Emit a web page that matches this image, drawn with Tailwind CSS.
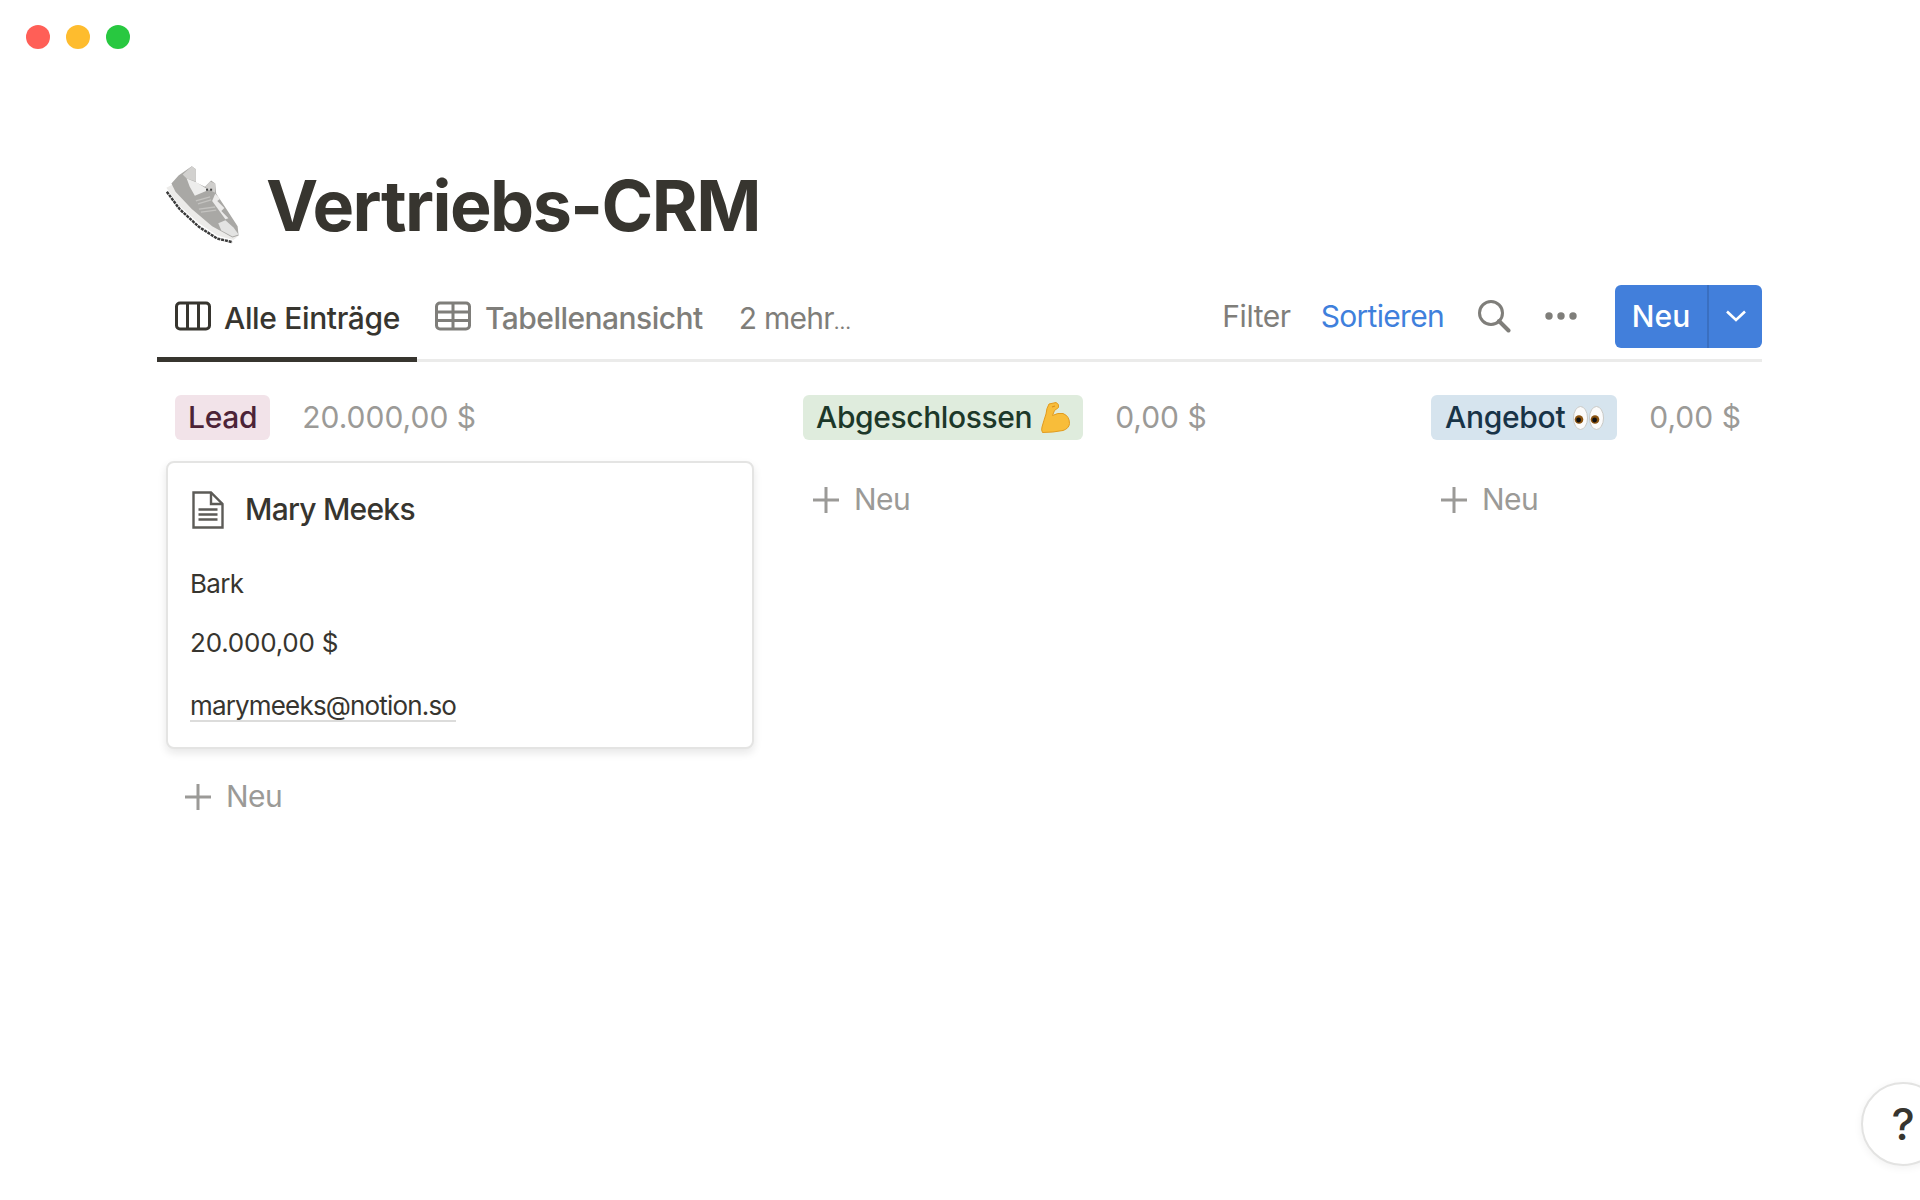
<!DOCTYPE html>
<html lang="de">
<head>
  <meta charset="UTF-8">
  <title>Vertriebs-CRM</title>
  <script src="https://cdn.jsdelivr.net/npm/@tailwindcss/browser@4"></script>
</head>
<body class="relative h-[1200px] w-[1920px] overflow-hidden bg-white font-['Inter',sans-serif] text-[#37352f] antialiased">
  <!-- window buttons -->
  <div class="flex gap-4 pl-[26px] pt-[25px]">
    <span class="size-6 rounded-full bg-[#ff5f57]"></span>
    <span class="size-6 rounded-full bg-[#febc2e]"></span>
    <span class="size-6 rounded-full bg-[#28c840]"></span>
  </div>

  <div class="pl-[157px] pr-[158px]">
    <!-- title -->
    <div class="mt-[115px] flex h-[84px] items-center pl-2">
      <svg class="-ml-[17px] mr-[6px] size-[112px] shrink-0" viewBox="0 0 110 110">
        <path d="M18.5 41 L31 58 L50 75.5 L68 87 L83 90.5" fill="none" stroke="#3a3a3a" stroke-width="2.4" stroke-dasharray="3 0.8"/>
        <path d="M18 37 L31 55 L50 72 L68 84 L84 88.5 L89 84 L60 60 L28 32 Z" fill="#ecebe9"/>
        <path d="M43 16 L47 19 L47 32 L56 36 L62 30 L66 33 L67 43 L77 58 L88 75 L89 84 L83 86 L63 75 L43 58 L27 41 L23 33 L30 25 Z" fill="#a9a8a5"/>
        <path d="M43 16 L47 19 L47 31 L38 28 L34 24 Z" fill="#d2d1cf"/>
        <path d="M38 28 L48 32 L56 37 L60 39 L46 45 L41 36 Z" fill="#ededec"/>
        <path d="M61 31 L66 33 L66 42 L60 39 L56 36 Z" fill="#cfcecc"/>
        <path d="M66 43 L71 48 L68 50 L75 57 L72 60 L79 67 L76 68 L68 57 L63 50 Z" fill="#ecebea"/>
        <path d="M69 72 L76 69 L84 76 L89 83 L83 85 L72 79 Z" fill="#e3e3e2"/>
        <path d="M47 50 L61 46 M49 53 L62 49 M50 58 L66 56 M52 61 L67 59" stroke="#c4c3c0" stroke-width="1.3" fill="none"/>
        <rect x="57" y="38" width="2" height="2" fill="#444"/><rect x="61" y="38" width="2" height="2" fill="#444"/>
      </svg>
      <h1 class="text-[70px] leading-none font-bold tracking-[-0.022em]">Vertriebs-CRM</h1>
    </div>

    <!-- view tabs and actions -->
    <div class="mt-[29px] flex h-[85px] items-center border-b-[3px] border-[#ebebea] pb-1">
      <div class="relative flex h-[78px] w-[260px] items-center gap-[13px] pt-1 pl-[18px] font-medium">
        <svg class="-mt-1 shrink-0" width="36" height="30" viewBox="0 0 36 30" fill="none" stroke="currentColor" stroke-width="3"><rect x="1.5" y="2" width="33" height="26" rx="3.5"/><path d="M12.5 2v26M23.5 2v26"/></svg>
        <span class="text-[30px] tracking-[-0.012em]">Alle Einträge</span>
        <span class="absolute inset-x-0 -bottom-[6.5px] h-[5px] bg-[#37352f]"></span>
      </div>
      <div class="ml-[18px] flex items-center gap-[14px] pt-1 font-medium text-[#7f7e7a]">
        <svg class="-mt-1 shrink-0" width="36" height="30" viewBox="0 0 36 30" fill="none" stroke="currentColor" stroke-width="3"><rect x="1.5" y="2" width="33" height="26" rx="3.5"/><path d="M1.5 11h33M1.5 19.5h33M18 2v26"/></svg>
        <span class="text-[30px] tracking-[-0.018em]">Tabellenansicht</span>
      </div>
      <span class="ml-[36px] pt-1 text-[30px] tracking-[-0.025em] text-[#7f7e7a]">2 mehr<span class="text-[20px]">…</span></span>
      <div class="ml-auto flex items-center">
        <span class="text-[30px] tracking-[-0.015em] text-[#7f7e7a]">Filter</span>
        <span class="ml-[30px] text-[30px] tracking-[-0.023em] text-[#3f80dc]">Sortieren</span>
        <svg class="ml-[33px]" width="34" height="34" viewBox="0 0 34 34" fill="none" stroke="#7f7e7a"><circle cx="14" cy="14" r="11.5" stroke-width="3"/><path d="M22 22 L31.5 31.5" stroke-width="4" stroke-linecap="round"/></svg>
        <svg class="ml-[34px]" width="32" height="8" viewBox="0 0 32 8" fill="#7f7e7a"><circle cx="4" cy="4" r="3.7"/><circle cx="16" cy="4" r="3.7"/><circle cx="28" cy="4" r="3.7"/></svg>
        <div class="ml-[38px] flex h-[63px] w-[147px] rounded-md bg-[#427fdb] text-white">
          <span class="flex w-[94px] items-center justify-center border-r-2 border-[#3a6fc0] text-[30px] font-medium">Neu</span>
          <span class="flex flex-1 items-center justify-center">
            <svg width="22" height="12" viewBox="0 0 22 12" fill="none" stroke="currentColor" stroke-width="2.6"><path d="M2 1.5 L11 10 L20 1.5"/></svg>
          </span>
        </div>
      </div>
    </div>

    <!-- board -->
    <div class="mt-[33px] ml-[10px] flex w-[1800px] gap-[42px]">
      <!-- Lead -->
      <section class="w-[586px] shrink-0">
        <div class="flex items-center pl-2">
          <span class="flex h-[45px] items-center rounded-md bg-[#f2e3e9] px-[13px] text-[30px] font-medium tracking-[-0.01em] text-[#4c2337]">Lead</span>
          <span class="ml-[32px] text-[30px] text-[#9b9a97]">20.000,00 $</span>
        </div>
        <article class="-mx-px mt-[21px] h-[288px] rounded-lg border-2 border-[#e4e4e3] bg-white pt-[24px] pl-6 shadow-[0_4px_8px_rgba(15,15,15,0.10)]">
          <div class="flex items-center gap-[21px]">
            <svg class="shrink-0" width="32" height="38" viewBox="0 0 32 38" fill="none" stroke="#5c5b57" stroke-width="2.4"><path d="M1.5 1.5H19L30.5 13V36.5H1.5Z"/><path d="M19 1.5V13H30.5M6.5 18.5H25.5M6.5 23.5H25.5M6.5 28.5H25.5"/></svg>
            <span class="text-[30px] font-medium tracking-[-0.025em]">Mary Meeks</span>
          </div>
          <div class="-ml-[2px]">
            <p class="mt-[36px] text-[26px] leading-[32px] tracking-[-0.025em]">Bark</p>
            <p class="mt-[27px] text-[26px] leading-[32px] tracking-[-0.008em]">20.000,00 $</p>
            <p class="mt-[33px] inline-block border-b-2 border-[#dcdcdb] text-[26px] leading-[28px] tracking-[-0.032em]">marymeeks@notion.so</p>
          </div>
        </article>
        <div class="mt-[25px] flex items-center gap-[14px] pl-[17px] text-[#9b9a97]">
          <svg width="28" height="28" viewBox="0 0 28 28" stroke="currentColor" stroke-width="3"><path d="M14 1V27M1 14H27"/></svg>
          <span class="text-[30px] tracking-[-0.02em]">Neu</span>
        </div>
      </section>

      <!-- Abgeschlossen -->
      <section class="w-[586px] shrink-0">
        <div class="flex items-center pl-2">
          <span class="flex h-[45px] items-center gap-[9px] rounded-md bg-[#dfecdd] px-[13px] text-[30px] font-medium tracking-[-0.013em] text-[#1c3829]">Abgeschlossen
            <svg width="29" height="31" viewBox="0 0 29 31"><path d="M8 2 L15 0.5 Q18.5 2 17.5 5.5 L13.5 8.5 L11.5 13.5 Q17 10.5 22 11.5 Q28.5 14 28.5 21.5 Q28 26.5 22 28.5 Q12 30.5 1.5 30.5 Q0 28 1 25 Q3 18 5 12 Q5.5 6 8 2Z" fill="#f8bd3a" stroke="#e29b1e" stroke-width="1"/><path d="M11 5 L14 4" stroke="#d98f1c" stroke-width="1.2"/></svg>
          </span>
          <span class="ml-[32px] text-[30px] text-[#9b9a97]">0,00 $</span>
        </div>
        <div class="mt-[37px] flex items-center gap-[14px] pl-[17px] text-[#9b9a97]">
          <svg width="28" height="28" viewBox="0 0 28 28" stroke="currentColor" stroke-width="3"><path d="M14 1V27M1 14H27"/></svg>
          <span class="text-[30px] tracking-[-0.02em]">Neu</span>
        </div>
      </section>

      <!-- Angebot -->
      <section class="w-[586px] shrink-0">
        <div class="flex items-center pl-2">
          <span class="flex h-[45px] items-center gap-[8px] rounded-md bg-[#d6e4ee] pl-[14px] pr-[13px] text-[30px] font-medium tracking-[-0.01em] text-[#183347]">Angebot
            <svg width="31" height="24" viewBox="0 0 31 24"><ellipse cx="7.5" cy="12" rx="7" ry="11.5" fill="#fbfbfb" stroke="#c9c9c6"/><ellipse cx="23.5" cy="12" rx="7" ry="11.5" fill="#fbfbfb" stroke="#c9c9c6"/><circle cx="6" cy="13.5" r="4.3" fill="#8a5310"/><circle cx="22" cy="13.5" r="4.3" fill="#8a5310"/><circle cx="5.6" cy="14" r="2.4" fill="#111"/><circle cx="21.6" cy="14" r="2.4" fill="#111"/></svg>
          </span>
          <span class="ml-[32px] text-[30px] text-[#9b9a97]">0,00 $</span>
        </div>
        <div class="mt-[37px] flex items-center gap-[14px] pl-[17px] text-[#9b9a97]">
          <svg width="28" height="28" viewBox="0 0 28 28" stroke="currentColor" stroke-width="3"><path d="M14 1V27M1 14H27"/></svg>
          <span class="text-[30px] tracking-[-0.02em]">Neu</span>
        </div>
      </section>
    </div>
  </div>

  <!-- help -->
  <div class="absolute top-[1082px] left-[1861px] flex size-[84px] items-center justify-center rounded-full border-2 border-[#e3e3e2] bg-white text-[44px] font-medium shadow-[0_2px_8px_rgba(15,15,15,0.06)]">?</div>
</body>
</html>
